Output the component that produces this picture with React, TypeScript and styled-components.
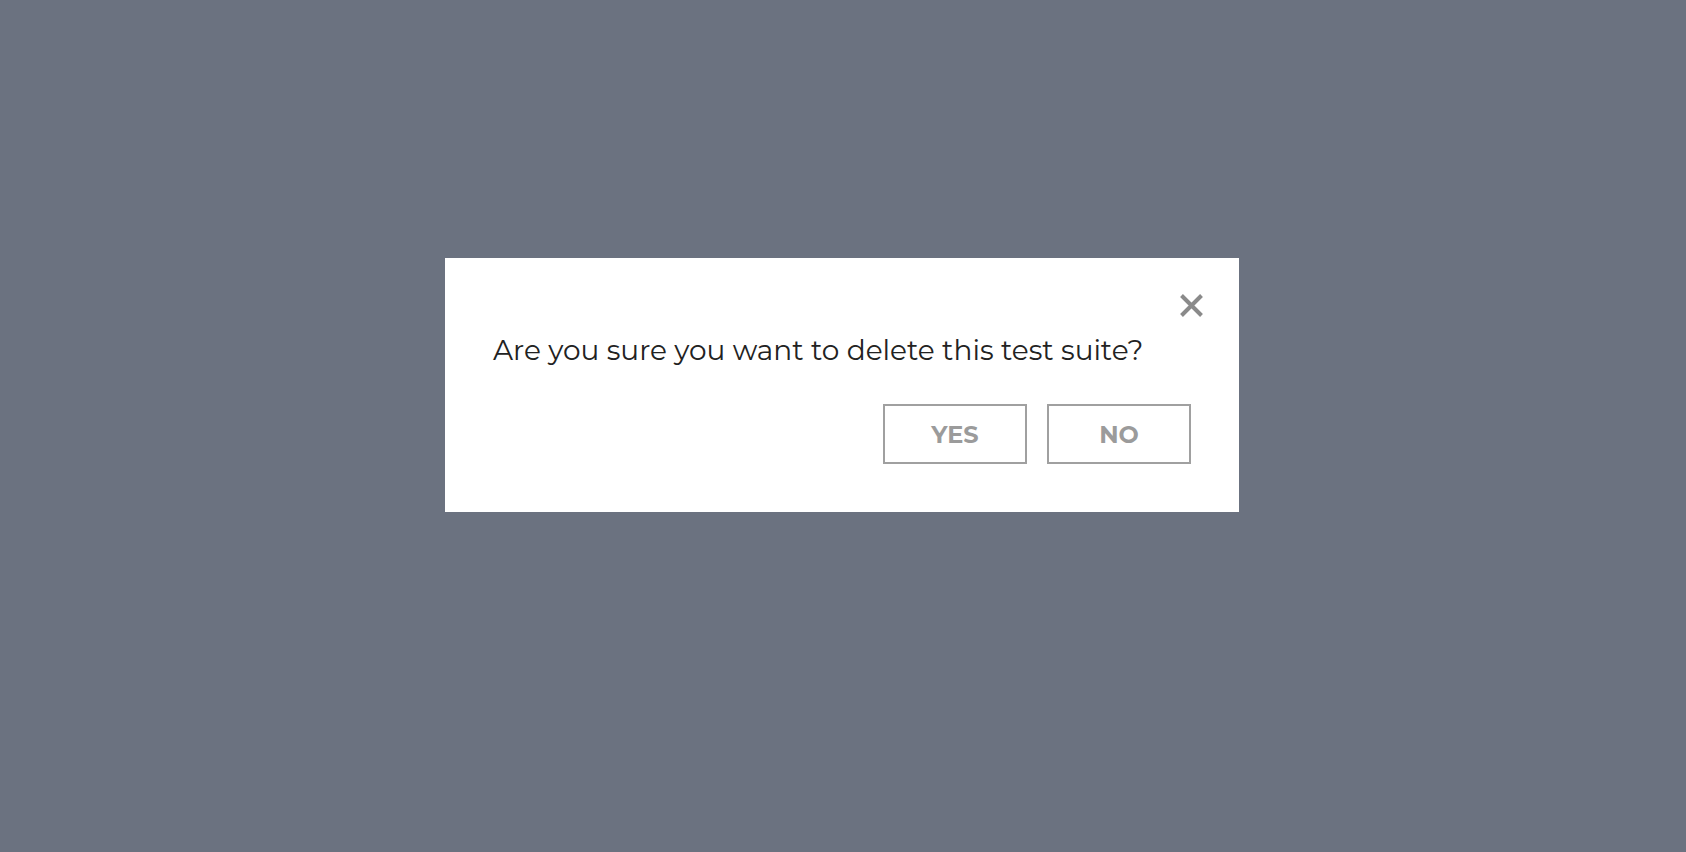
import React, { FC } from "react";
import styled, { createGlobalStyle } from "styled-components";

const GlobalStyle = createGlobalStyle`
  html, body {
    margin: 0;
    padding: 0;
    height: 100%;
  }
  body {
    background-color: #6b7280;
    font-family: "Montserrat", Inter, "Noto Sans", sans-serif;
  }
`;

const CloseIcon: FC = () => (
  <svg width="23" height="23" viewBox="0 0 23 23" fill="none">
    <path d="M1.5 1.5L21.5 21.5M21.5 1.5L1.5 21.5" stroke="#8a8a8a" strokeWidth="4" />
  </svg>
);

const App: FC = () => {
  return (
    <>
      <GlobalStyle />
      <Overlay>
        <Dialog role="dialog">
          <Header>
            <CloseButton aria-label="Close">
              <CloseIcon />
            </CloseButton>
          </Header>
          <Message>Are you sure you want to delete this test suite?</Message>
          <Actions>
            <ActionButton>Yes</ActionButton>
            <ActionButton>No</ActionButton>
          </Actions>
        </Dialog>
      </Overlay>
    </>
  );
};

export default App;

const Overlay = styled.div`
  display: flex;
  justify-content: center;
  align-items: flex-start;
  min-height: 100vh;
  padding: 258px 2px 0 0;
  box-sizing: border-box;
`;

const Dialog = styled.div`
  display: flex;
  flex-direction: column;
  width: 794px;
  box-sizing: border-box;
  padding: 36px 48px 48px;
  background-color: #ffffff;
`;

const Header = styled.div`
  display: flex;
  justify-content: flex-end;
  height: 23px;
  margin-right: -12px;
`;

const CloseButton = styled.button`
  display: flex;
  padding: 0;
  border: none;
  background: none;
  cursor: pointer;
`;

const Message = styled.p`
  margin: 16px 0 0;
  font-size: 28px;
  line-height: 34px;
  color: #222222;
`;

const Actions = styled.div`
  display: flex;
  justify-content: flex-end;
  gap: 20px;
  margin-top: 37px;
`;

const ActionButton = styled.button`
  width: 144px;
  height: 60px;
  border: 2px solid #a0a0a0;
  background: #ffffff;
  color: #9b9b9b;
  font-family: inherit;
  font-size: 24px;
  font-weight: 700;
  text-transform: uppercase;
  cursor: pointer;
`;
